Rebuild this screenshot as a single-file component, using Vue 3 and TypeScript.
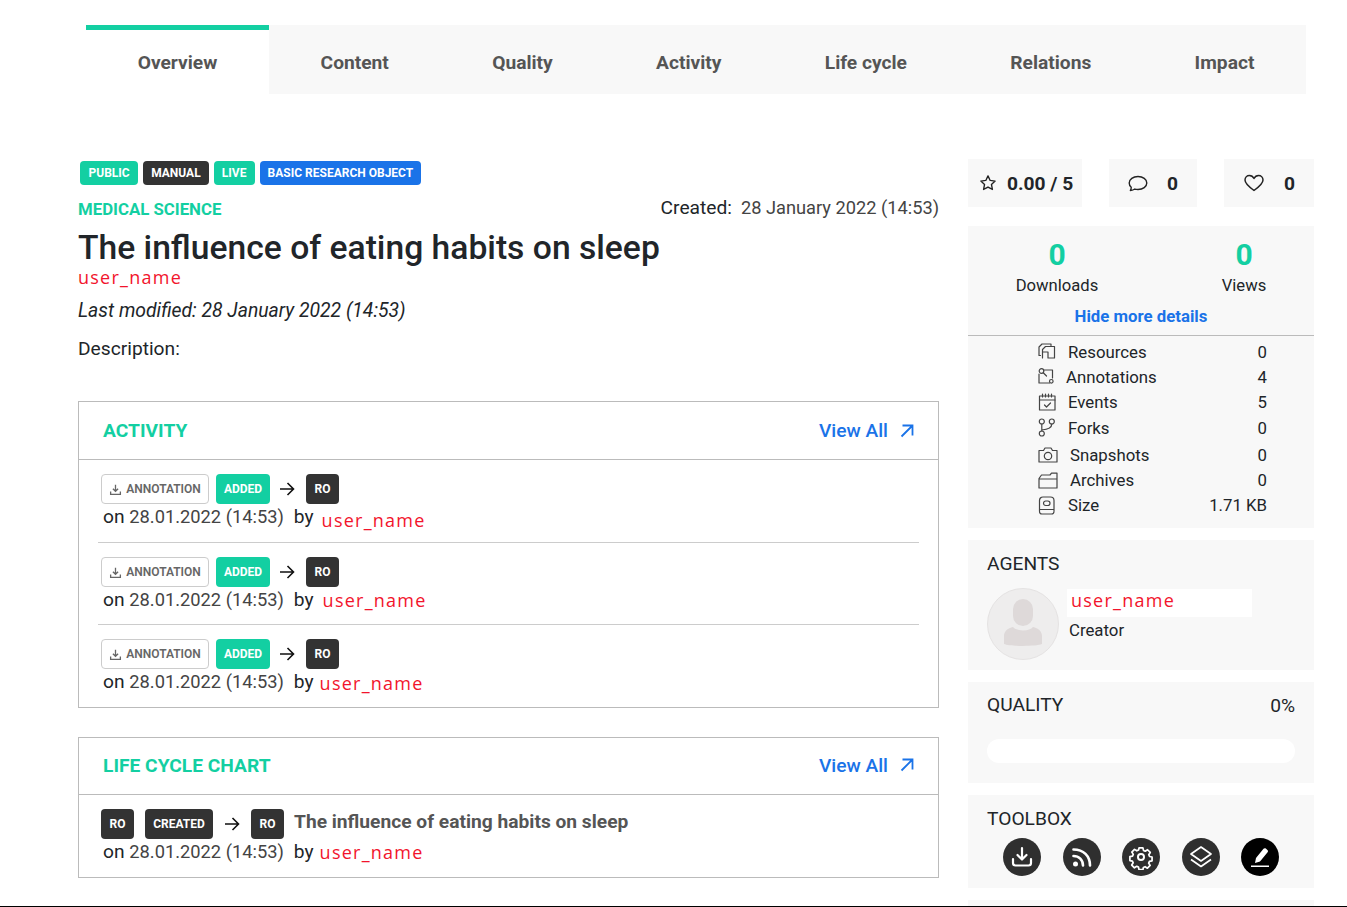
<script setup lang="ts">
const tabs = ['Overview', 'Content', 'Quality', 'Activity', 'Life cycle', 'Relations', 'Impact']
const activity = [
  { cls: 'r1' },
  { cls: 'r2' },
  { cls: 'r3' },
]
const details = [
  { key: 'res', label: 'Resources', value: '0' },
  { key: 'ann', label: 'Annotations', value: '4' },
  { key: 'evt', label: 'Events', value: '5' },
  { key: 'frk', label: 'Forks', value: '0' },
  { key: 'snp', label: 'Snapshots', value: '0' },
  { key: 'arc', label: 'Archives', value: '0' },
  { key: 'siz', label: 'Size', value: '1.71 KB' },
]
</script>

<template>
  <div class="page">
    <div class="content">
      <nav class="tabs">
        <div v-for="(t, i) in tabs" :key="t" class="tab" :class="{ active: i === 0 }">{{ t }}</div>
      </nav>

      <div class="main">
        <section class="left">
          <div class="badges">
            <span class="badge teal">PUBLIC</span>
            <span class="badge dark">MANUAL</span>
            <span class="badge teal">LIVE</span>
            <span class="badge blue">BASIC RESEARCH OBJECT</span>
          </div>
          <div class="meta-row">
            <span class="domain">MEDICAL SCIENCE</span>
            <span class="created"><span class="created-label">Created:</span><span class="date">28 January 2022 (14:53)</span></span>
          </div>
          <h1 class="title">The influence of eating habits on sleep</h1>
          <div class="user author">user_name</div>
          <p class="modified">Last modified: 28 January 2022 (14:53)</p>
          <p class="desc">Description:</p>

          <div class="card activity">
            <header class="card-head">
              <h2>ACTIVITY</h2>
              <a class="view">View All
                <svg width="14" height="14" viewBox="0 0 14 14" fill="none" stroke="currentColor" stroke-width="1.800"><path d="M1.500 12.500 12 2M2.500 1.500H12.500V11.500"/></svg>
              </a>
            </header>
            <div class="rows">
              <div v-for="r in activity" :key="r.cls" class="row" :class="r.cls">
                <div class="pills">
                  <span class="pill outline">
                    <svg width="13" height="13" viewBox="0 0 16 16" fill="none" stroke="currentColor" stroke-width="1.600"><path d="M8 2v8M4.800 7 8 10.200 11.200 7M2 10.500V14h12v-3.500"/></svg>
                    ANNOTATION
                  </span>
                  <span class="pill teal added">ADDED</span>
                  <svg class="arrow" width="16" height="14" viewBox="0 0 16 14" fill="none" stroke="#111" stroke-width="1.600"><path d="M1 7h13.500M8.500 1l6 6-6 6"/></svg>
                  <span class="pill dark ro">RO</span>
                </div>
                <div class="when">
                  <span>on <span class="date">28.01.2022 (14:53)</span></span>
                  <span class="by">by</span>
                  <span class="user">user_name</span>
                </div>
              </div>
            </div>
          </div>

          <div class="card lifecycle">
            <header class="card-head lc-head">
              <h2>LIFE CYCLE CHART</h2>
              <a class="view">View All
                <svg width="14" height="14" viewBox="0 0 14 14" fill="none" stroke="currentColor" stroke-width="1.800"><path d="M1.500 12.500 12 2M2.500 1.500H12.500V11.500"/></svg>
              </a>
            </header>
            <div class="lc-body">
              <div class="lc-line">
                <span class="pill dark ro">RO</span>
                <span class="pill dark created-pill">CREATED</span>
                <svg class="arrow" width="16" height="14" viewBox="0 0 16 14" fill="none" stroke="#111" stroke-width="1.600"><path d="M1 7h13.500M8.500 1l6 6-6 6"/></svg>
                <span class="pill dark ro">RO</span>
                <span class="lc-title">The influence of eating habits on sleep</span>
              </div>
              <div class="when lc-when">
                <span>on <span class="date">28.01.2022 (14:53)</span></span>
                <span class="by">by</span>
                <span class="user">user_name</span>
              </div>
            </div>
          </div>
        </section>

        <aside class="right">
          <div class="stat-row">
            <div class="stat s1">
              <svg width="18" height="18" viewBox="0 0 24 24" fill="none" stroke="#222" stroke-width="1.800" stroke-linejoin="round"><path d="m12 2.500 2.900 6.100 6.600.8-4.900 4.600 1.300 6.600L12 17.400l-5.900 3.200 1.300-6.600-4.900-4.600 6.600-.8z"/></svg>
              <b>0.00 / 5</b>
            </div>
            <div class="stat s2">
              <svg width="20" height="18" viewBox="0 0 20 18" fill="none" stroke="#222" stroke-width="1.400"><path d="M3.200 13.200C1.900 12 1.200 10.600 1.200 9c0-3.600 3.900-6.500 8.800-6.500S18.800 5.400 18.800 9 14.900 15.500 10 15.500c-1.100 0-2.200-.15-3.200-.45-1.100.8-2.600 1.300-4.400 1.400.5-.9.800-1.800.8-2.750z" stroke-linejoin="round"/></svg>
              <b>0</b>
            </div>
            <div class="stat s3">
              <svg width="20" height="18" viewBox="0 0 20 18" fill="none" stroke="#222" stroke-width="1.500" stroke-linejoin="round"><path d="M10 16.500C4.500 12.600 1 9.700 1 6.100 1 3.300 3.100 1.500 5.400 1.500c2 0 3.600 1 4.600 3 1-2 2.600-3 4.600-3C16.900 1.500 19 3.300 19 6.100c0 3.600-3.500 6.500-9 10.400z"/></svg>
              <b>0</b>
            </div>
          </div>

          <div class="panel numbers">
            <div class="counts">
              <div class="count"><strong>0</strong><span>Downloads</span></div>
              <div class="count"><strong>0</strong><span>Views</span></div>
            </div>
            <a class="hide">Hide more details</a>
            <ul class="details">
              <li v-for="d in details" :key="d.key" :class="d.key">
                <span class="d-ico">
                  <svg width="20" height="19" viewBox="0 0 20 19" fill="none" stroke="#444" stroke-width="1.200" stroke-linejoin="round" stroke-linecap="round">
                    <template v-if="d.key === 'res'"><path d="M2.500 13.500H1V5L4 2H13V3.500"/><path d="M4.500 16V7.500L7.500 4.500H16.500V16H10V10H4.500"/></template>
                    <template v-else-if="d.key === 'ann'"><path d="M6 3H14.500V11M11.500 16H1V7"/><circle cx="3.500" cy="4" r="2.300"/><circle cx="13.300" cy="14.300" r="1.800"/><path d="M5.500 6 8.500 9"/></template>
                    <template v-else-if="d.key === 'evt'"><rect x="1.500" y="3" width="15.500" height="14"/><path d="M1.500 7h15.500M4.500 1v3M7.500 1v3M10.500 1v3M13.500 1v3M6.500 12l2 2 4-4"/></template>
                    <template v-else-if="d.key === 'frk'"><circle cx="3.800" cy="3.500" r="2.500"/><circle cx="13.800" cy="3.500" r="2.500"/><circle cx="3.800" cy="15.500" r="2.500"/><path d="M3.800 6v7M13.800 6c0 4-4 5.500-10 6"/></template>
                    <template v-else-if="d.key === 'snp'"><path d="M1 5.500h4.500L7 3h6l1.500 2.500H19V17H1z"/><circle cx="10" cy="11" r="3.700"/></template>
                    <template v-else-if="d.key === 'arc'"><path d="M1 17V7.500L3.500 4H12L13.500 2.200H19V17zM1 8h18"/></template>
                    <template v-else><path d="M1.500 15V4.500C1.500 2.500 3 1 5 1H12.500C14.500 1 16 2.500 16 4.500V15M1.500 13.500H16M1.500 15.500C1.500 17 2.500 18 4 18H13.500C15 18 16 17 16 15.500"/><rect x="5.500" y="5" width="6.500" height="4.500" rx="2.200"/></template>
                  </svg>
                </span>
                <span class="d-label">{{ d.label }}</span>
                <span class="d-val">{{ d.value }}</span>
              </li>
            </ul>
          </div>

          <div class="panel agents">
            <h3>AGENTS</h3>
            <div class="agent">
              <div class="avatar">
                <svg width="72" height="72" viewBox="0 0 72 72">
                  <circle cx="36" cy="36" r="35.500" fill="#eeeded" stroke="#e4e2e2"/>
                  <rect x="26" y="11" width="20" height="27" rx="10" fill="#ded9d9"/>
                  <path d="M17 48c0-5 4-8 9-9 2 2 5 3.500 10 3.500S44 41 46 39c5 1 9 4 9 9v8c-6 2.500-32 2.500-38 0z" fill="#ded9d9"/>
                </svg>
              </div>
              <div class="agent-info">
                <div class="user agent-name">user_name</div>
                <div class="role">Creator</div>
              </div>
            </div>
          </div>

          <div class="panel quality">
            <div class="q-head"><h3>QUALITY</h3><span>0%</span></div>
            <div class="bar"></div>
          </div>

          <div class="panel toolbox">
            <h3>TOOLBOX</h3>
            <div class="tools">
              <span class="tool">
                <svg width="22" height="22" viewBox="0 0 22 22" fill="none" stroke="#fff" stroke-width="2.200" stroke-linecap="round" stroke-linejoin="round"><path d="M11 2v11M6.500 9 11 13.500 15.500 9M2 13v4c0 1.500 1 2.500 2.500 2.500h13c1.500 0 2.500-1 2.500-2.500v-4"/></svg>
              </span>
              <span class="tool">
                <svg width="24" height="24" viewBox="0 0 24 24" fill="none" stroke="#fff" stroke-width="2.600"><circle cx="5.500" cy="19" r="2.500" fill="#fff" stroke="none"/><path d="M3.500 11c5.500 0 9.500 4 9.500 9.500M3.500 4.500c10 0 16.500 6.500 16.500 16" stroke-linecap="round"/></svg>
              </span>
              <span class="tool">
                <svg width="26" height="26" viewBox="0 0 24 24" fill="none" stroke="#fff" stroke-width="1.800" stroke-linejoin="round"><path d="M10 2.500h4l.6 2.700 1.800.8 2.400-1.500 2.800 2.800-1.500 2.400.8 1.800 2.600.5v4l-2.700.6-.8 1.800 1.500 2.400-2.800 2.800-2.400-1.500-1.800.8-.5 2.300h-4l-.6-2.700-1.800-.8-2.400 1.500-2.800-2.800 1.500-2.400-.8-1.800-2.600-.5v-4l2.700-.6.800-1.800-1.500-2.400 2.800-2.800 2.400 1.500 1.800-.8z" transform="translate(1.300 1.300) scale(.89)"/><circle cx="12" cy="12" r="2.800"/></svg>
              </span>
              <span class="tool">
                <svg width="26" height="26" viewBox="0 0 26 26" fill="none" stroke="#fff" stroke-width="1.700" stroke-linejoin="round"><path d="M13 3 23 10 13 17 3 10z"/><path d="M3 15.500 13 22.500 23 15.500"/></svg>
              </span>
              <span class="tool black">
                <svg width="22" height="22" viewBox="0 0 22 22" fill="#fff"><path d="M6 17 7 12 14.500 2.800c.6-.7 1.600-.8 2.300-.2l1.600 1.300c.7.600.8 1.600.2 2.300L11 15.500zM2 19.500h18V21H2z"/></svg>
              </span>
            </div>
          </div>

          <div class="panel stub"></div>
        </aside>
      </div>
    </div>
    <div class="rule"></div>
  </div>
</template>

<style>
html, body { margin: 0; background: #fff; }
</style>

<style scoped>
* { box-sizing: border-box; }
.page {
  width: 1347px; height: 907px; display: flex; flex-direction: column; overflow: hidden;
  font-family: Roboto, "Liberation Sans", sans-serif; color: #212529; font-size: 19.200px; background: #fff;
}
.content { flex: 1; min-height: 0; overflow: hidden; }
.rule { height: 1px; background: #000; flex: none; }

.tabs { display: flex; margin: 25px 41px 0 86px; height: 69px; background: #f8f8f8; }
.tab { padding: 5px 51.670px 0; display: flex; align-items: center; font-size: 19.200px; font-weight: 700; color: #555; white-space: nowrap; flex: none; }
.tab.active { background: #fff; border-top: 5px solid #13cfa2; padding-top: 0; }

.main { display: flex; margin: 65px 33px 0 78px; gap: 29px; align-items: flex-start; }
.left { width: 861px; flex: none; }
.right { width: 346px; flex: none; }

.badges { display: flex; gap: 5px; padding-left: 2px; margin-top: 2px; }
.badge { height: 24px; padding: 0 8px; border-radius: 4px; color: #fff; font-size: 12px; font-weight: 700; display: inline-flex; align-items: center; }
.badge:first-child { padding: 0 8.500px; }
.badge:nth-child(3) { padding: 0 8.200px; }
.teal { background: #13cfa2; color: #fff; }
.dark { background: #333; color: #fff; }
.blue { background: #1a73e8; }
.meta-row { display: flex; justify-content: space-between; align-items: flex-start; margin-top: 12px; height: 24px; }
.domain { color: #13cfa2; font-size: 16.800px; font-weight: 700; line-height: 22px; margin-top: 1px; }
.created { line-height: 22px; color: #212529; display: flex; align-items: baseline; gap: 9px; }
.created .date { font-size: 18.240px; }
.title { margin: 6px 0 0; font-size: 33.650px; font-weight: 500; line-height: 42px; color: #212529; }
.user { font-family: "Open Sans", sans-serif; color: #f2142c; letter-spacing: 1.250px; font-size: 18px; line-height: 24px; }
.author { margin-top: -4px; }
.modified { margin: 10px 0 0; font-style: italic; line-height: 24px; font-size: 19.350px; }
.desc { margin: 14px 0 0; line-height: 24px; }

.card { border: 1px solid #bbb; background: #fff; }
.activity { margin-top: 40px; height: 307px; }
.lifecycle { margin-top: 29px; height: 141px; }
.card-head { height: 58px; border-bottom: 1px solid #bbb; display: flex; justify-content: space-between; align-items: center; padding: 0 24px; }
.lc-head { height: 57px; padding-bottom: 2px; }
.card-head h2 { margin: 0; font-size: 19.200px; font-weight: 700; color: #13cfa2; }
.view { color: #1a73e8; font-size: 19.200px; font-weight: 500; display: flex; align-items: center; gap: 12px; }
.rows { padding: 0 19px; }
.row { height: 82px; padding-top: 14px; border-bottom: 1px solid #ccc; }
.row.r1 { height: 83px; }
.row:last-child { border-bottom: 0; }
.pills { display: flex; align-items: center; padding-left: 3px; }
.pill { height: 30px; border-radius: 4px; font-size: 12px; font-weight: 700; display: inline-flex; align-items: center; justify-content: center; }
.outline { width: 108px; border: 1px solid #ccc; color: #666; gap: 4px; font-weight: 600; background: #fff; }
.added { width: 54px; margin-left: 7px; }
.arrow { margin: 0 11px 0 9px; flex: none; }
.ro { width: 33px; }
.when { display: flex; align-items: flex-start; padding-left: 5px; color: #212529; line-height: 24px; font-size: 19.200px; margin-top: 1px; }
.when .date { font-size: 18.300px; }
.date { color: #444; }
.by { margin-left: 10px; margin-right: 8px; }
.r1 .user { margin-top: 3px; }
.r2 .by { margin-right: 9px; }
.r3 .by { margin-right: 6px; }
.r3 .user { margin-top: 1px; }
.lc-body { padding: 14px 22px 0; }
.lc-line { display: flex; align-items: flex-start; }
.created-pill { width: 68px; margin-left: 11px; }
.lc-line .arrow { margin: 8px 11px 0; }
.lc-title { font-size: 19.200px; font-weight: 700; color: #555; margin: 1px 0 0 10px; line-height: 24px; }
.lc-when { padding-left: 2px; }
.lc-when .by { margin-right: 6px; }

.stat-row { display: flex; justify-content: space-between; }
.stat { height: 48px; background: #f8f8f8; display: flex; align-items: center; }
.stat b { font-size: 19.200px; font-weight: 700; color: #212529; }
.s1 { width: 114px; padding-left: 11px; gap: 10px; }
.s2 { width: 88px; padding-left: 19px; gap: 19px; }
.s3 { width: 90px; padding-left: 20px; gap: 20px; }

.panel { background: #f8f8f8; margin-top: 12px; }
.numbers { margin-top: 19px; height: 302px; }
.counts { display: flex; padding-top: 10px; gap: 30px; }
.count { display: flex; flex-direction: column; align-items: center; width: 178px; flex: none; }
.count + .count { width: 136px; }
.count strong { color: #13cfa2; font-size: 30px; font-weight: 700; line-height: 38px; }
.count span { line-height: 24px; font-size: 16.640px; }
.hide { display: block; text-align: center; color: #1a73e8; font-weight: 700; font-size: 16.800px; line-height: 24px; margin-top: 6px; padding-bottom: 7px; border-bottom: 1px solid #bbb; }
.details { list-style: none; margin: 3px 0 0; padding: 0 47px 0 70px; }
.details li { display: flex; align-items: center; height: 25.300px; font-size: 16.800px; }
.d-ico { width: 30px; display: flex; flex: none; }
.d-val { margin-left: auto; }
.ann .d-label { margin-left: -2px; }
.snp .d-label, .arc .d-label { margin-left: 2px; }
.details li.snp { margin-top: 2px; }

h3 { margin: 0; font-weight: 400; font-size: 19.200px; line-height: 24px; color: #212529; }
.agents { height: 130px; padding: 12px 19px 0; }
.agent { display: flex; margin-top: 12px; }
.avatar { width: 72px; height: 72px; flex: none; }
.agent-info { margin-left: 8px; }
.agent-name { width: 185px; height: 28px; background: #fff; padding-left: 4px; line-height: 22px; margin-top: 1px; }
.role { font-size: 16.800px; margin: 1px 0 0 2px; line-height: 24px; }
.quality { height: 101px; padding: 11px 19px 0; }
.q-head { display: flex; justify-content: space-between; align-items: center; }
.bar { height: 24px; border-radius: 12px; background: #fff; margin-top: 22px; }
.toolbox { height: 93px; padding: 12px 19px 0; }
.tools { display: flex; margin-top: 7px; padding-left: 16px; gap: 21.500px; }
.tool { width: 38px; height: 38px; border-radius: 50%; background: #2f2f2f; display: flex; align-items: center; justify-content: center; flex: none; }
.tool.black { background: #000; }
.stub { height: 40px; }
</style>
